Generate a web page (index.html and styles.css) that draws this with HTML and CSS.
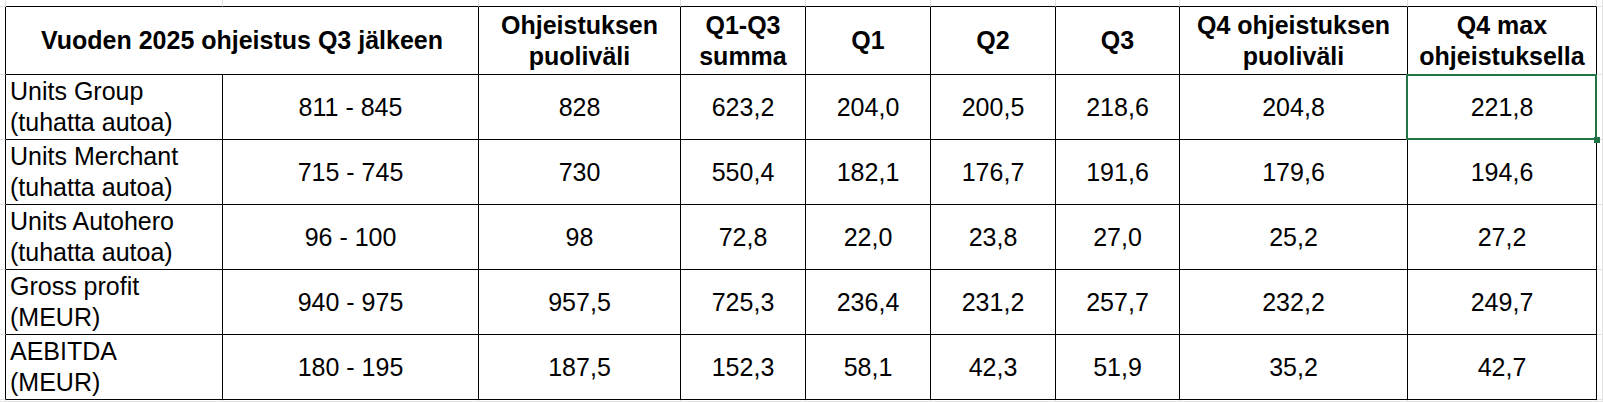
FILE: index.html
```html
<!DOCTYPE html>
<html lang="fi">
<head>
  <meta charset="UTF-8" />
  <meta name="viewport" content="width=device-width, initial-scale=1.0"/>
  <title>Ohjeistus 2025</title>
  <link rel="stylesheet" href="styles.css">
</head>
<body>
  <table class="sheet">
    <tr class="gap-top">
      <td class="edge w-edge"></td>
      <td class="w-label"></td>
      <td class="w-range"></td>
      <td class="w-mid"></td>
      <td class="w-sum"></td>
      <td class="w-q"></td>
      <td class="w-q"></td>
      <td class="w-q3"></td>
      <td class="w-q4"></td>
      <td class="w-max"></td>
      <td class="edge-r w-edge-r"></td>
    </tr>
    <tr class="head">
      <td class="edge"></td>
      <th colspan="2">Vuoden 2025 ohjeistus Q3 jälkeen</th>
      <th>Ohjeistuksen<br>puoliväli</th>
      <th>Q1-Q3<br>summa</th>
      <th>Q1</th>
      <th>Q2</th>
      <th>Q3</th>
      <th>Q4 ohjeistuksen<br>puoliväli</th>
      <th>Q4 max<br>ohjeistuksella</th>
      <td class="edge-r"></td>
    </tr>
    <tr class="row">
      <td class="edge"></td>
      <td class="label">Units Group<br>(tuhatta autoa)</td>
      <td>811 - 845</td>
      <td>828</td>
      <td>623,2</td>
      <td>204,0</td>
      <td>200,5</td>
      <td>218,6</td>
      <td>204,8</td>
      <td class="selected">221,8</td>
      <td class="edge-r"></td>
    </tr>
    <tr class="row">
      <td class="edge"></td>
      <td class="label">Units Merchant<br>(tuhatta autoa)</td>
      <td>715 - 745</td>
      <td>730</td>
      <td>550,4</td>
      <td>182,1</td>
      <td>176,7</td>
      <td>191,6</td>
      <td>179,6</td>
      <td>194,6</td>
      <td class="edge-r"></td>
    </tr>
    <tr class="row">
      <td class="edge"></td>
      <td class="label">Units Autohero<br>(tuhatta autoa)</td>
      <td>96 - 100</td>
      <td>98</td>
      <td>72,8</td>
      <td>22,0</td>
      <td>23,8</td>
      <td>27,0</td>
      <td>25,2</td>
      <td>27,2</td>
      <td class="edge-r"></td>
    </tr>
    <tr class="row">
      <td class="edge"></td>
      <td class="label">Gross profit<br>(MEUR)</td>
      <td>940 - 975</td>
      <td>957,5</td>
      <td>725,3</td>
      <td>236,4</td>
      <td>231,2</td>
      <td>257,7</td>
      <td>232,2</td>
      <td>249,7</td>
      <td class="edge-r"></td>
    </tr>
    <tr class="row">
      <td class="edge"></td>
      <td class="label">AEBITDA<br>(MEUR)</td>
      <td>180 - 195</td>
      <td>187,5</td>
      <td>152,3</td>
      <td>58,1</td>
      <td>42,3</td>
      <td>51,9</td>
      <td>35,2</td>
      <td>42,7</td>
      <td class="edge-r"></td>
    </tr>
    <tr class="gap-bottom">
      <td class="edge"></td>
      <td></td><td></td><td></td><td></td><td></td>
      <td></td><td></td><td></td><td></td>
      <td class="edge-r"></td>
    </tr>
  </table>
</body>
</html>
```

FILE: styles.css
```css
* {
  box-sizing: border-box;
}

body {
  margin: 0;
  padding: 0;
  background: #fff;
  overflow: hidden;
  font-family: "Liberation Sans", Arial, sans-serif;
  color: #000;
}

.sheet {
  width: 1603px;
  table-layout: fixed;
  border-collapse: separate;
  border-spacing: 0;
  font-size: 25px;
  line-height: 31px;
}

/* plain spreadsheet gridlines */
.sheet td,
.sheet th {
  padding: 0 4px;
  border-right: 1px solid #e1e1e1;
  border-bottom: 1px solid #e1e1e1;
  text-align: center;
  vertical-align: middle;
  white-space: nowrap;
}

/* column widths (border included) */
.w-edge { width: 6px; }
.w-label { width: 217px; }
.w-range { width: 256px; }
.w-mid { width: 202px; }
.w-sum { width: 125px; }
.w-q { width: 125px; }
.w-q3 { width: 124px; }
.w-q4 { width: 228px; }
.w-max { width: 189px; }
.w-edge-r { width: 6px; }

.gap-top { height: 7px; }
.head { height: 68px; }
.row { height: 65px; }
.gap-bottom { height: 2px; }

.sheet .edge,
.sheet .edge-r {
  padding: 0;
}

/* black borders of the table itself */
.gap-top td {
  border-bottom-color: #000;
}

.gap-top .edge,
.gap-top .edge-r {
  border-bottom-color: #e1e1e1;
}

.head .edge,
.row .edge {
  border-right-color: #000;
}

.head th,
.row td {
  border-right-color: #000;
  border-bottom-color: #000;
}

.head .edge,
.row .edge,
.head .edge-r,
.row .edge-r {
  border-bottom-color: #e1e1e1;
}

.head .edge-r,
.row .edge-r {
  border-right-color: #e1e1e1;
}

.head th {
  font-weight: bold;
}

.row .label {
  text-align: left;
  padding-left: 4px;
}

.selected {
  position: relative;
}

.selected::after {
  content: "";
  position: absolute;
  left: -2px;
  right: -1px;
  top: -1px;
  bottom: -1px;
  border: 2px solid #217346;
}

.selected::before {
  content: "";
  position: absolute;
  right: -4px;
  bottom: -4px;
  width: 6px;
  height: 6px;
  background: #217346;
  z-index: 1;
}
```
